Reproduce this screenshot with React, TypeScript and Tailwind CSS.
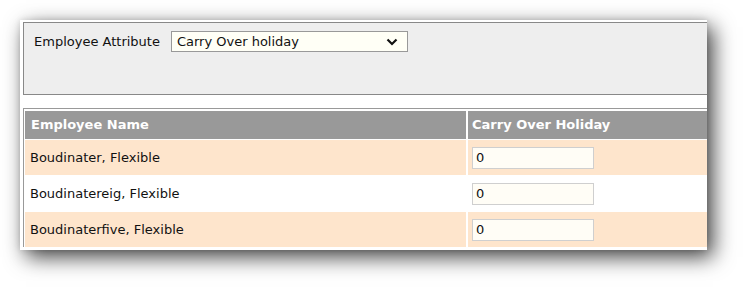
import { Fragment } from "react";

const rows = [
  { name: "Boudinater, Flexible", value: "0", shaded: true },
  { name: "Boudinatereig, Flexible", value: "0", shaded: false },
  { name: "Boudinaterfive, Flexible", value: "0", shaded: true },
];

function ChevronDown() {
  return (
    <svg width="12" height="8" viewBox="0 0 12 8" className="shrink-0">
      <path d="M1.5 1.5 L6 6 L10.5 1.5" fill="none" stroke="#111" strokeWidth="2.2" />
    </svg>
  );
}

export default function App() {
  return (
    <div className="w-[747px] h-[287px] overflow-hidden bg-white pt-[20px] pl-[20px] font-['DejaVu_Sans',sans-serif] text-[13px] text-[#111]">
      <div className="w-[687px] h-[230px] bg-white shadow-[6px_7px_20px_rgba(0,0,0,0.75),0_0_6px_rgba(0,0,0,0.12)] pt-[2px] pl-[3px]">
        {/* Attribute picker panel */}
        <div className="h-[73px] border-t border-l border-b border-[#888] bg-[#eeeeee] pt-[8px] pl-[10px]">
          <div className="flex items-center gap-[11px]">
            <span>Employee Attribute</span>
            <div className="w-[237px] h-[21px] flex items-center justify-between border border-[#999] bg-[#fffff6] pl-[5px] pr-[9px]">
              <span>Carry Over holiday</span>
              <ChevronDown />
            </div>
          </div>
        </div>

        {/* Employee table */}
        <div className="mt-[13px] border-t border-l border-[#999] pt-[2px] pl-[1px] bg-white">
          <div className="grid grid-cols-[441px_1fr] gap-x-[2px] gap-y-[1px]">
            <div className="h-[28px] bg-[#999999] text-white font-bold flex items-center pl-[6px]">Employee Name</div>
            <div className="h-[28px] bg-[#999999] text-white font-bold flex items-center pl-[4px]">Carry Over Holiday</div>
            {rows.map((r) => (
              <Fragment key={r.name}>
                <div className={`h-[35px] flex items-center pl-[5px] ${r.shaded ? "bg-[#fee5cc]" : "bg-white"}`}>
                  {r.name}
                </div>
                <div className={`h-[35px] flex items-center pl-[4px] ${r.shaded ? "bg-[#fee5cc]" : "bg-white"}`}>
                  <input
                    readOnly
                    value={r.value}
                    className="w-[122px] h-[22px] border border-[#cfcfcf] bg-[#fffdf6] px-[3px] outline-none text-[13px]"
                  />
                </div>
              </Fragment>
            ))}
          </div>
        </div>
      </div>
    </div>
  );
}
